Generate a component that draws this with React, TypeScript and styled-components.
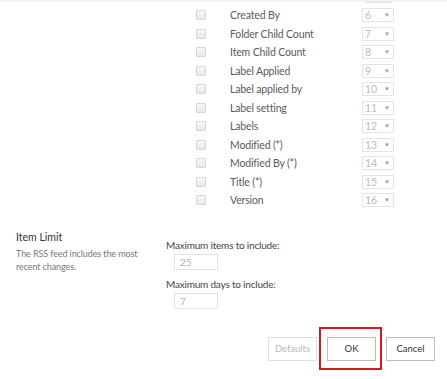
import React from "react";
import styled, { createGlobalStyle } from "styled-components";

const Global = createGlobalStyle`
  html, body { margin: 0; padding: 0; background: #ffffff; }
  body { font-family: Lato, "Open Sans", sans-serif; color: #444; }
`;

const Page = styled.div`
  width: 447px;
  height: 379px;
  overflow: hidden;
  position: relative;
  background: #fff;
`;

const TopEdge = styled.div`
  height: 2px;
  background: #f1f1f1;
  display: flex;
  justify-content: flex-end;
  padding-right: 55px;
  margin-bottom: 4px;
`;

const EdgeStub = styled.div`
  width: 27px;
  height: 2px;
  border-bottom: 1px solid #e2e2e2;
`;

const FieldList = styled.div`
  display: flex;
  flex-direction: column;
  padding-left: 196px;
`;

const FieldRow = styled.div`
  height: 18.5px;
  display: grid;
  grid-template-columns: 34px 134px 28px;
  align-items: center;
`;

const Check = styled.span`
  width: 8px;
  height: 8px;
  border: 1px solid #d6d6d6;
  background: linear-gradient(#f6f6f6, #e9e9e9);
  border-radius: 1px;
`;

const FieldName = styled.span`
  font-size: 10.5px;
  letter-spacing: -0.15px;
  color: #5a5a5a;
  white-space: nowrap;
`;

const OrderSelect = styled.div`
  width: 25px;
  height: 12px;
  border: 1px solid #e3e3e3;
  display: flex;
  align-items: center;
  justify-content: space-between;
  padding: 0 3px 0 2px;
  box-sizing: content-box;
  margin-left: -2px;
`;

const OrderNum = styled.span`
  font-size: 10.5px;
  color: #bcbcbc;
  line-height: 1;
`;

const Caret = styled.span`
  font-size: 6px;
  color: #9a9a9a;
  line-height: 1;
`;

const LimitSection = styled.div`
  display: grid;
  grid-template-columns: 166px 1fr;
  padding-left: 16px;
  margin-top: 20px;
`;

const SectionInfo = styled.div`
  display: flex;
  flex-direction: column;
  padding-right: 8px;
`;

const SectionTitle = styled.div`
  font-size: 10.5px;
  color: #333;
  line-height: 14px;
`;

const SectionDesc = styled.div`
  font-size: 9px;
  letter-spacing: -0.1px;
  color: #777;
  line-height: 13px;
  margin-top: 3px;
  max-width: 128px;
`;

const Fields = styled.div`
  display: flex;
  flex-direction: column;
  margin-left: -16px;
  padding-top: 8px;
`;

const FieldLabel = styled.div`
  font-size: 10px;
  letter-spacing: -0.2px;
  color: #444;
  line-height: 14px;
`;

const NumberBox = styled.div`
  width: 44px;
  height: 16px;
  border: 1px solid #e2e2e2;
  margin: 2px 0 7px 8px;
  font-size: 10px;
  color: #b0b0b0;
  display: flex;
  align-items: center;
  padding-left: 5px;
  box-sizing: border-box;
`;

const ButtonBar = styled.div`
  display: flex;
  justify-content: flex-end;
  gap: 10px;
  padding-right: 12px;
  margin-top: 21px;
`;

const Button = styled.div<{ $disabled?: boolean }>`
  width: 49px;
  height: 24px;
  box-sizing: border-box;
  border: 1px solid ${(p) => (p.$disabled ? "#e0e0e0" : "#bdbdbd")};
  color: ${(p) => (p.$disabled ? "#b8b8b8" : "#333")};
  font-size: 9.5px;
  display: flex;
  align-items: center;
  justify-content: center;
  background: #fff;
`;

const Highlight = styled.div`
  position: relative;
`;

const HighlightRing = styled.div`
  position: absolute;
  left: -8px;
  top: -10px;
  width: 63px;
  height: 43px;
  box-sizing: border-box;
  border: 2px solid #d41920;
  pointer-events: none;
`;

const fields = [
  "Created By",
  "Folder Child Count",
  "Item Child Count",
  "Label Applied",
  "Label applied by",
  "Label setting",
  "Labels",
  "Modified (*)",
  "Modified By (*)",
  "Title (*)",
  "Version",
];

export default function App() {
  return (
    <Page>
      <Global />
      <TopEdge>
        <EdgeStub />
      </TopEdge>
      <FieldList>
        {fields.map((f, i) => (
          <FieldRow key={f}>
            <Check />
            <FieldName>{f}</FieldName>
            <OrderSelect>
              <OrderNum>{i + 6}</OrderNum>
              <Caret>▼</Caret>
            </OrderSelect>
          </FieldRow>
        ))}
      </FieldList>
      <LimitSection>
        <SectionInfo>
          <SectionTitle>Item Limit</SectionTitle>
          <SectionDesc>The RSS feed includes the most recent changes.</SectionDesc>
        </SectionInfo>
        <Fields>
          <FieldLabel>Maximum items to include:</FieldLabel>
          <NumberBox>25</NumberBox>
          <FieldLabel>Maximum days to include:</FieldLabel>
          <NumberBox>7</NumberBox>
        </Fields>
      </LimitSection>
      <ButtonBar>
        <Button $disabled>Defaults</Button>
        <Highlight>
          <Button>OK</Button>
          <HighlightRing />
        </Highlight>
        <Button>Cancel</Button>
      </ButtonBar>
    </Page>
  );
}
